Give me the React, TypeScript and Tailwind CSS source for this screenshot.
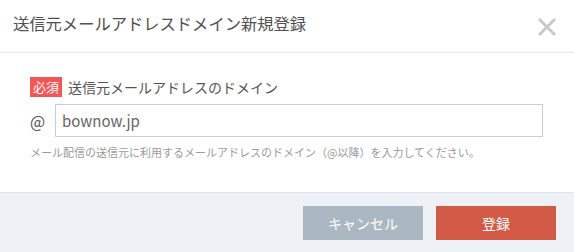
import React from 'react';

export default function App() {
  return (
    <div
      className="w-[574px] h-[252px] bg-white flex flex-col overflow-hidden"
      style={{ fontFamily: '"Noto Sans CJK JP", "Noto Sans", sans-serif' }}
    >
      {/* Header */}
      <div className="h-[53px] border-b border-[#e6e6e6] flex items-start justify-between pl-[13px] pr-[17px]">
        <h1 className="mt-[11px] text-[16.3px] leading-[24px] text-[#505050] font-normal">
          送信元メールアドレスドメイン新規登録
        </h1>
        <button className="mt-[17px] w-[20px] h-[20px] flex items-center justify-center">
          <svg width="20" height="20" viewBox="0 0 20 20">
            <path d="M2 2 L18 18 M18 2 L2 18" stroke="#c9c9c9" strokeWidth="3" fill="none" />
          </svg>
        </button>
      </div>

      {/* Body */}
      <div className="h-[139px] pt-[24px] pl-[30px] pr-[31px] flex flex-col">
        <div className="flex items-center gap-[6px] h-[20px]">
          <span className="w-[32px] h-[20px] bg-[#f25757] text-white text-[13px] leading-[20px] text-center">
            必須
          </span>
          <span className="text-[14px] leading-[20px] text-[#555555]">送信元メールアドレスのドメイン</span>
        </div>
        <div className="flex items-center mt-[7px]">
          <span className="w-[25px] text-[16px] text-[#555555]">@</span>
          <input
            defaultValue="bownow.jp"
            className="flex-1 h-[33px] border border-[#cccccc] px-[6px] text-[15px] text-[#666666] outline-none"
          />
        </div>
        <p className="mt-[7px] text-[11px] leading-[16px] text-[#9a9a9a]">
          メール配信の送信元に利用するメールアドレスのドメイン（@以降）を入力してください。
        </p>
      </div>

      {/* Footer */}
      <div className="flex-1 bg-[#eef1f5] border-t border-[#e1e4e8] flex items-start justify-end gap-[13px] pt-[13px] pr-[18px]">
        <button className="w-[120px] h-[34px] bg-[#abb8c2] text-white text-[14px]">キャンセル</button>
        <button className="w-[120px] h-[34px] bg-[#d35a47] text-white text-[14px]">登録</button>
      </div>
    </div>
  );
}
